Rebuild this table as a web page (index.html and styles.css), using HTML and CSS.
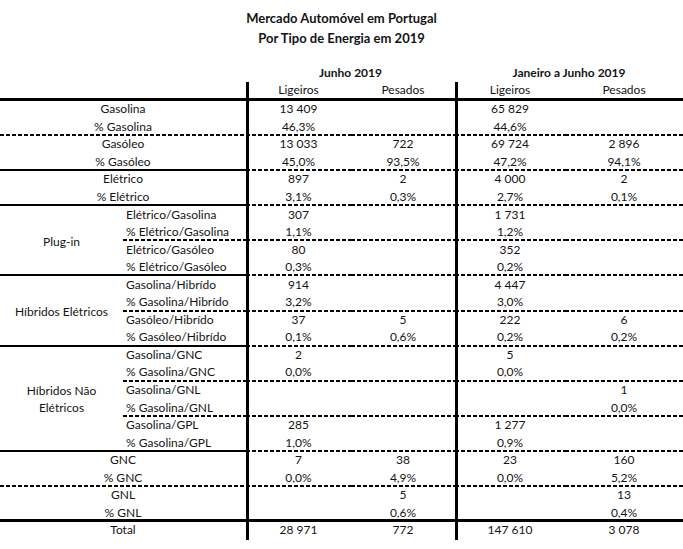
FILE: index.html
```html
<!DOCTYPE html>
<html lang="pt">
<head>
<meta charset="utf-8">
<title>Mercado Automóvel em Portugal</title>
<link rel="stylesheet" href="styles.css">
</head>
<body>
<div class="page">
  <h1 class="title">Mercado Automóvel em Portugal<br>Por Tipo de Energia em 2019</h1>
  <table class="tbl">
    <colgroup>
      <col class="c-grp"><col class="c-sub"><col class="c-jl"><col class="c-jp"><col class="c-al"><col class="c-ap">
    </colgroup>
    <thead>
      <tr class="h1">
        <th colspan="2"></th>
        <th colspan="2">Junho 2019</th>
        <th colspan="2">Janeiro a Junho 2019</th>
      </tr>
      <tr class="h2">
        <th colspan="2"></th>
        <th class="v">Ligeiros</th><th>Pesados</th>
        <th class="v">Ligeiros</th><th>Pesados</th>
      </tr>
    </thead>
    <tbody>
      <tr><td class="lab" colspan="2">Gasolina</td><td class="num v">13 409</td><td class="num"></td><td class="num v">65 829</td><td class="num"></td></tr>
      <tr class="d"><td class="lab" colspan="2">% Gasolina</td><td class="num v">46,3%</td><td class="num"></td><td class="num v">44,6%</td><td class="num"></td></tr>

      <tr><td class="lab" colspan="2">Gasóleo</td><td class="num v">13 033</td><td class="num">722</td><td class="num v">69 724</td><td class="num">2 896</td></tr>
      <tr class="s"><td class="lab" colspan="2">% Gasóleo</td><td class="num v">45,0%</td><td class="num">93,5%</td><td class="num v">47,2%</td><td class="num">94,1%</td></tr>

      <tr><td class="lab" colspan="2">Elétrico</td><td class="num v">897</td><td class="num">2</td><td class="num v">4 000</td><td class="num">2</td></tr>
      <tr class="s"><td class="lab" colspan="2">% Elétrico</td><td class="num v">3,1%</td><td class="num">0,3%</td><td class="num v">2,7%</td><td class="num">0,1%</td></tr>

      <tr><td class="grp" rowspan="4">Plug-in</td><td class="sub">Elétrico/Gasolina</td><td class="num v">307</td><td class="num"></td><td class="num v">1 731</td><td class="num"></td></tr>
      <tr class="d"><td class="sub">% Elétrico/Gasolina</td><td class="num v">1,1%</td><td class="num"></td><td class="num v">1,2%</td><td class="num"></td></tr>
      <tr><td class="sub">Elétrico/Gasóleo</td><td class="num v">80</td><td class="num"></td><td class="num v">352</td><td class="num"></td></tr>
      <tr class="s"><td class="sub">% Elétrico/Gasóleo</td><td class="num v">0,3%</td><td class="num"></td><td class="num v">0,2%</td><td class="num"></td></tr>

      <tr><td class="grp" rowspan="4">Híbridos Elétricos</td><td class="sub">Gasolina/Hibrído</td><td class="num v">914</td><td class="num"></td><td class="num v">4 447</td><td class="num"></td></tr>
      <tr class="d"><td class="sub">% Gasolina/Hibrído</td><td class="num v">3,2%</td><td class="num"></td><td class="num v">3,0%</td><td class="num"></td></tr>
      <tr><td class="sub">Gasóleo/Hibrído</td><td class="num v">37</td><td class="num">5</td><td class="num v">222</td><td class="num">6</td></tr>
      <tr class="s"><td class="sub">% Gasóleo/Hibrído</td><td class="num v">0,1%</td><td class="num">0,6%</td><td class="num v">0,2%</td><td class="num">0,2%</td></tr>

      <tr><td class="grp" rowspan="6">Híbridos Não<br>Elétricos</td><td class="sub">Gasolina/GNC</td><td class="num v">2</td><td class="num"></td><td class="num v">5</td><td class="num"></td></tr>
      <tr class="d"><td class="sub">% Gasolina/GNC</td><td class="num v">0,0%</td><td class="num"></td><td class="num v">0,0%</td><td class="num"></td></tr>
      <tr><td class="sub">Gasolina/GNL</td><td class="num v"></td><td class="num"></td><td class="num v"></td><td class="num">1</td></tr>
      <tr class="d"><td class="sub">% Gasolina/GNL</td><td class="num v"></td><td class="num"></td><td class="num v"></td><td class="num">0,0%</td></tr>
      <tr><td class="sub">Gasolina/GPL</td><td class="num v">285</td><td class="num"></td><td class="num v">1 277</td><td class="num"></td></tr>
      <tr class="s"><td class="sub">% Gasolina/GPL</td><td class="num v">1,0%</td><td class="num"></td><td class="num v">0,9%</td><td class="num"></td></tr>

      <tr><td class="lab" colspan="2">GNC</td><td class="num v">7</td><td class="num">38</td><td class="num v">23</td><td class="num">160</td></tr>
      <tr class="d"><td class="lab" colspan="2">% GNC</td><td class="num v">0,0%</td><td class="num">4,9%</td><td class="num v">0,0%</td><td class="num">5,2%</td></tr>

      <tr><td class="lab" colspan="2">GNL</td><td class="num v"></td><td class="num">5</td><td class="num v"></td><td class="num">13</td></tr>
      <tr class="x"><td class="lab" colspan="2">% GNL</td><td class="num v"></td><td class="num">0,6%</td><td class="num v"></td><td class="num">0,4%</td></tr>

      <tr class="tot"><td class="lab" colspan="2">Total</td><td class="num v">28 971</td><td class="num">772</td><td class="num v">147 610</td><td class="num">3 078</td></tr>
    </tbody>
  </table>
</div>
</body>
</html>
```

FILE: styles.css
```css
html, body {
  margin: 0;
  padding: 0;
  background: #ffffff;
}

body {
  font-family: Lato, "Open Sans", "Liberation Sans", sans-serif;
  color: #141414;
}

.page {
  width: 683px;
}

.title {
  margin: 0;
  padding-top: 8px;
  font-size: 13px;
  line-height: 20px;
  font-weight: 700;
  text-align: center;
}

.tbl {
  margin-top: 16px;
  width: 683px;
  table-layout: fixed;
  border-collapse: separate;
  border-spacing: 0;
  font-size: 12px;
}

.c-grp { width: 123px; }
.c-sub { width: 123px; }
.c-jl { width: 105px; }
.c-jp { width: 104px; }
.c-al { width: 110px; }
.c-ap { width: 118px; }

.tbl th,
.tbl td {
  padding: 0 0 2px;
  height: 15.56px;
  line-height: 15px;
  text-align: center;
  vertical-align: middle;
  white-space: nowrap;
  background-repeat: no-repeat;
  background-position: left bottom;
}

.tbl th {
  font-weight: 400;
}

.tbl .h1 th {
  font-weight: 700;
  height: 16px;
}

.tbl .h2 th {
  height: 15px;
  padding-bottom: 4px;
  background-image: linear-gradient(#000, #000);
  background-size: 100% 3px;
}

.tbl .v {
  box-shadow: inset 3px 0 0 #000;
}

.tbl td.sub {
  text-align: left;
  padding-left: 3px;
}

.tbl td.grp {
  padding: 0;
  line-height: 17.56px;
  background-image: linear-gradient(#000, #000);
  background-size: 100% 2px;
}

/* dashed bottom rule across the whole row */
.tbl tr.d td {
  background-image: repeating-linear-gradient(90deg, #000 0 4px, transparent 4px 6px);
  background-size: 100% 2px;
}

/* group end: solid under labels, dashed under figures */
.tbl tr.s td.lab,
.tbl tr.s td.sub {
  background-image: linear-gradient(#000, #000);
  background-size: 100% 2px;
}

.tbl tr.s td.num {
  background-image: repeating-linear-gradient(90deg, #000 0 4px, transparent 4px 6px);
  background-size: 100% 2px;
}

/* solid rule above total */
.tbl tr.x td {
  background-image: linear-gradient(#000, #000);
  background-size: 100% 3px;
}
```
